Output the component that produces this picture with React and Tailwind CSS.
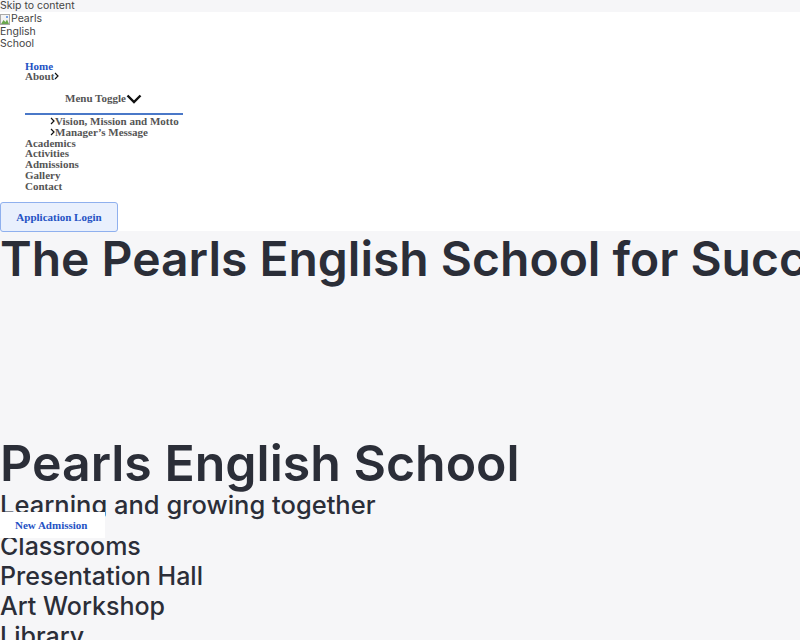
import React from 'react'

const serif = { fontFamily: '"Liberation Serif", "DejaVu Serif", serif' }

function Chevron({ down }) {
    if (down) {
        return (
            <svg width="16" height="10" viewBox="0 0 16 10" className="inline-block align-middle">
                <path d="M1.5 1.5 L8 8 L14.5 1.5" fill="none" stroke="#111" strokeWidth="2.4" />
            </svg>
        )
    }
    return (
        <svg width="5" height="8" viewBox="0 0 5 8" className="inline-block align-top mt-[1px]">
            <path d="M1 1 L4 4 L1 7" fill="none" stroke="#111" strokeWidth="1.2" />
        </svg>
    )
}

function BrokenImage() {
    return (
        <svg width="10" height="11" viewBox="0 0 10 11" className="inline-block align-top mt-[1px] mr-[1px]">
            <rect x="0.5" y="0.5" width="9" height="10" fill="#f4f4f4" stroke="#aaa" />
            <path d="M1 10 L3.5 6 L5.5 8 L7 5.5 L9 10 Z" fill="#6aa84f" />
            <circle cx="7" cy="3" r="1" fill="#4a86e8" />
        </svg>
    )
}

function App() {
    const mainLinks = ['Academics', 'Activities', 'Admissions', 'Gallery', 'Contact']
    const facilities = ['Classrooms', 'Presentation Hall', 'Art Workshop', 'Library']

    return (
        <div className="h-[640px] w-[800px] overflow-hidden bg-[#f6f6f8] text-[#2b2e38]" style={{ fontFamily: 'Inter, "Noto Sans", sans-serif' }}>
            <div className="h-[12px] text-[10.5px] leading-[12px] text-[#444]">Skip to content</div>

            <header className="h-[219px] bg-white">
                <div className="w-[50px] pt-[1px] text-[10.5px] leading-[12.5px] text-[#444]">
                    <BrokenImage />Pearls English School
                </div>

                <ul className="ml-[25px] mt-[10px] text-[11px] font-bold leading-[10.7px] text-[#555]" style={serif}>
                    <li className="text-[#2452c4]">Home</li>
                    <li>About<Chevron /></li>
                    <li className="pl-[40px] pt-[11px]">Menu Toggle<Chevron down /></li>
                    <li className="mt-[9px] w-[158px] border-t-2 border-[#4a78c8] pt-[1px]">
                        <ul className="pl-[25px]">
                            <li><Chevron />Vision, Mission and Motto</li>
                            <li><Chevron />Manager’s Message</li>
                        </ul>
                    </li>
                    {mainLinks.map(link => (
                        <li key={link}>{link}</li>
                    ))}
                </ul>

                <button
                    className="mt-[11px] h-[30px] w-[118px] rounded-[3px] border border-[#8fb0ee] bg-[#e9f0fd] text-[11px] font-bold text-[#2452c4]"
                    style={serif}
                >
                    Application Login
                </button>
            </header>

            <main className="whitespace-nowrap">
                <h1 className="text-[48px] font-semibold leading-[56px]">
                    The Pearls English School for Success
                </h1>

                <div className="h-[148px]"></div>

                <h2 className="text-[50px] font-semibold leading-[56px]">Pearls English School</h2>
                <h3 className="mt-[1px] text-[25.5px] font-medium leading-[26px]">Learning and growing together</h3>

                <div className="relative -mt-[6px] h-[26px] w-[105px] bg-white">
                    <a className="block pl-[15px] pt-[6px] text-[11px] font-bold leading-[14px] text-[#2452c4]" style={serif}>
                        New Admission
                    </a>
                </div>

                <ul className="-mt-[7px] text-[25px] font-medium leading-[30px]">
                    {facilities.map(f => (
                        <li key={f}>{f}</li>
                    ))}
                </ul>
            </main>
        </div>
    )
}

export default App
